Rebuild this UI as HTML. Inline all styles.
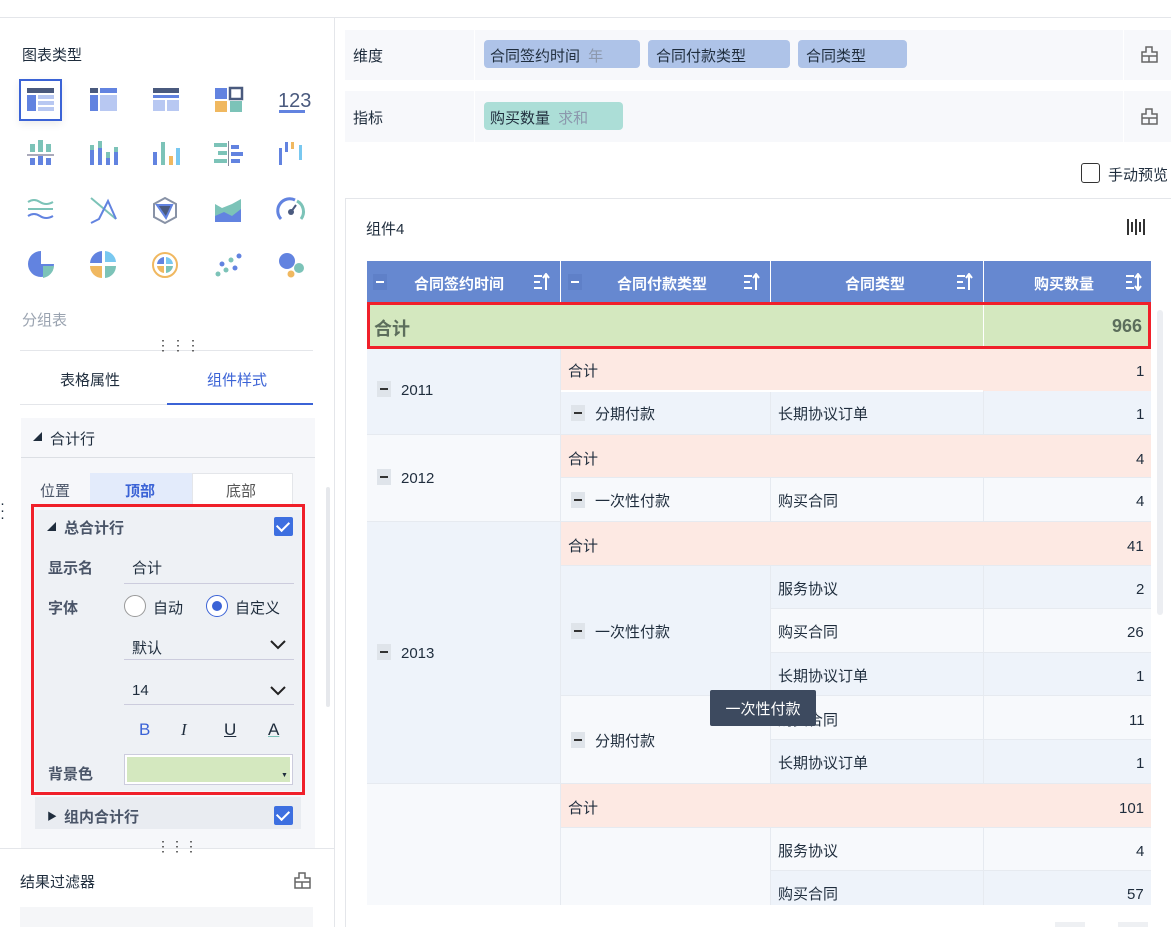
<!DOCTYPE html>
<html><head><meta charset="utf-8"><style>
*{box-sizing:border-box;margin:0;padding:0}
body{width:1171px;height:927px;overflow:hidden;background:#fff;font-family:"Liberation Sans","Noto Sans CJK SC",sans-serif;font-size:15px;color:#1f2d3d;position:relative}
.a{position:absolute}
.t{position:absolute;white-space:nowrap}
.n{position:absolute;white-space:nowrap;margin-top:3px}
.mn{display:inline-block;width:14px;height:16px;background:#dfe4ea;margin-right:10px;position:relative;vertical-align:-2px}
.mn:after{content:"";position:absolute;left:3px;top:7px;width:8px;height:2px;background:#333}
.chk{position:absolute;width:19px;height:19px;background:#3d6fe0;border-radius:2px}
.chk:after{content:"";position:absolute;left:5px;top:2px;width:6px;height:10px;border:solid #fff;border-width:0 2px 2px 0;transform:rotate(45deg)}
.pink{position:absolute;background:#fde9e3}
</style></head><body>
<div class="a" style="left:0;top:17px;width:1171px;height:1px;background:#e4e6ea"></div>
<div class="a" style="left:334px;top:18px;width:1px;height:909px;background:#e4e6ea"></div>
<div class="t" style="left:22px;top:44px;font-size:15px">图表类型</div>
<div class="a" style="left:19px;top:79px;width:43px;height:42px;border:2px solid #3b63d6;box-shadow:0 3px 8px rgba(0,0,0,.08)"></div>
<svg class="a" style="left:0;top:70px" width="334" height="230">
<g>
<rect x="27" y="18" width="27" height="5" fill="#4a5a7e"/><rect x="27" y="25" width="9" height="16" fill="#6283e0"/><rect x="38" y="25" width="16" height="4" fill="#b8c8f2"/><rect x="38" y="31" width="16" height="4" fill="#b8c8f2"/><rect x="38" y="37" width="16" height="4" fill="#b8c8f2"/>
<rect x="90" y="18" width="8" height="5" fill="#4a5a7e"/><rect x="100" y="18" width="17" height="5" fill="#6283e0"/><rect x="90" y="25" width="8" height="16" fill="#6283e0"/><rect x="100" y="25" width="17" height="16" fill="#b8c8f2"/>
<rect x="153" y="18" width="26" height="5" fill="#4a5a7e"/><rect x="153" y="25" width="26" height="3" fill="#6283e0"/><rect x="153" y="30" width="12" height="11" fill="#b8c8f2"/><rect x="167" y="30" width="12" height="11" fill="#b8c8f2"/>
<rect x="215" y="18" width="12" height="11" fill="#6283e0"/><rect x="230" y="18" width="12" height="11" fill="none" stroke="#4a5a7e" stroke-width="2.5"/><rect x="215" y="31" width="12" height="11" fill="#f0b860"/><rect x="230" y="31" width="12" height="11" fill="#7cc3b8"/>
<text x="278" y="37" font-size="20" fill="#4a5a7e" font-family="Liberation Sans">123</text><rect x="279" y="40" width="26" height="3" fill="#6283e0"/>
</g>
<g transform="translate(0,62)">
<rect x="30" y="12" width="5" height="8" fill="#7cc3b8"/><rect x="38" y="8" width="5" height="12" fill="#7cc3b8"/><rect x="46" y="12" width="5" height="8" fill="#7cc3b8"/><rect x="27" y="22" width="27" height="2" fill="#aab"/><rect x="30" y="26" width="5" height="7" fill="#6283e0"/><rect x="38" y="24" width="5" height="9" fill="#6283e0"/><rect x="46" y="26" width="5" height="7" fill="#6283e0"/>
<rect x="90" y="18" width="4" height="15" fill="#6283e0"/><rect x="90" y="13" width="4" height="5" fill="#7cc3b8"/><rect x="98" y="16" width="4" height="17" fill="#6283e0"/><rect x="98" y="9" width="4" height="7" fill="#7cc3b8"/><rect x="106" y="26" width="4" height="7" fill="#6283e0"/><rect x="106" y="20" width="4" height="6" fill="#7cc3b8"/><rect x="114" y="20" width="4" height="13" fill="#6283e0"/><rect x="114" y="15" width="4" height="5" fill="#7cc3b8"/>
<rect x="153" y="20" width="4" height="13" fill="#6283e0"/><rect x="161" y="10" width="4" height="23" fill="#7cc3b8"/><rect x="169" y="24" width="4" height="9" fill="#f0b860"/><rect x="176" y="16" width="4" height="17" fill="#79c8f0"/>
<rect x="214" y="11" width="13" height="4" fill="#7cc3b8"/><rect x="218" y="19" width="9" height="4" fill="#7cc3b8"/><rect x="214" y="27" width="13" height="4" fill="#7cc3b8"/><rect x="228" y="9" width="1" height="25" fill="#889"/><rect x="231" y="13" width="8" height="4" fill="#6283e0"/><rect x="231" y="20" width="12" height="4" fill="#6283e0"/><rect x="231" y="27" width="9" height="4" fill="#6283e0"/>
<rect x="279" y="16" width="3" height="17" fill="#6283e0"/><rect x="285" y="10" width="3" height="10" fill="#6283e0"/><rect x="291" y="10" width="3" height="7" fill="#f0b860"/><rect x="299" y="13" width="3" height="15" fill="#79c8f0"/>
</g>
<g transform="translate(0,119)" fill="none" stroke-width="2">
<path d="M28 13 Q34 9 40 13 T53 13 M28 20 H53" stroke="#7cc3b8"/><path d="M28 27 Q34 23 40 27 T53 27" stroke="#6283e0"/>
<path d="M91 9 L116 30" stroke="#7cc3b8"/><path d="M91 34 L99 30 L108 12 L116 30" stroke="#6283e0"/>
<path d="M165 9 L176 15 L176 28 L165 34 L154 28 L154 15Z" stroke="#8892a6"/><path d="M157 16 L172 16 L166 29Z" fill="#4a5a7e" stroke="#6283e0"/>
<path d="M215 24 L215 15 L222 19 L232 15 L241 10 L241 33 L215 33Z" fill="#7cc3b8" stroke="none"/><path d="M215 33 L215 27 L224 23 L232 27 L241 20 L241 33Z" fill="#6283e0" stroke="none"/>
<path d="M281 30 A12 12 0 0 1 295 11" stroke="#6283e0" stroke-width="3"/><path d="M297 12 A12 12 0 0 1 301 30" stroke="#7cc3b8" stroke-width="3"/><circle cx="291" cy="23" r="3" fill="#4a5a7e" stroke="none"/><path d="M291 23 L296 16" stroke="#4a5a7e"/>
</g>
<g transform="translate(0,167)">
<path d="M41 14 A13 13 0 1 0 54 27 L41 27Z" fill="#6283e0"/><path d="M43 29 H54 A13 13 0 0 1 43 41Z" fill="#7cc3b8"/>
<path d="M102 14 A13 13 0 0 0 90 26 L102 26Z" fill="#6283e0"/><path d="M105 14 A12 12 0 0 1 116 25 L105 25Z" fill="#79c8f0"/><path d="M90 29 H102 V41 A12 12 0 0 1 90 29Z" fill="#f0b860"/><path d="M105 29 H116 A12 12 0 0 1 105 41Z" fill="#7cc3b8"/>
<circle cx="165" cy="28" r="12" fill="none" stroke="#f0b860" stroke-width="2"/><path d="M164 20 A8 8 0 0 0 157 27 H164Z" fill="#6283e0"/><path d="M166 20 A8 8 0 0 1 173 27 H166Z" fill="#79c8f0"/><path d="M157 29 H164 V36 A8 8 0 0 1 157 29Z" fill="#f0b860"/><path d="M166 29 H173 A8 8 0 0 1 166 36Z" fill="#7cc3b8"/>
<circle cx="218" cy="37" r="2.5" fill="#7cc3b8"/><circle cx="226" cy="33" r="2.5" fill="#7cc3b8"/><circle cx="235" cy="31" r="2.5" fill="#6283e0"/><circle cx="222" cy="27" r="2.5" fill="#6283e0"/><circle cx="231" cy="23" r="2.5" fill="#7cc3b8"/><circle cx="239" cy="19" r="2.5" fill="#6283e0"/>
<circle cx="287" cy="24" r="8" fill="#6283e0"/><circle cx="299" cy="31" r="5" fill="#7cc3b8"/><circle cx="291" cy="37" r="3.5" fill="#f0b860"/>
</g>
</svg>
<div class="t" style="left:22px;top:309px;color:#9aa3b0">分组表</div>
<div class="a" style="left:20px;top:350px;width:293px;height:1px;background:#e4e6ea"></div>
<div class="t" style="left:156px;top:337px;font-size:14px;letter-spacing:1px;color:#333">⋮⋮⋮</div>
<div class="t" style="left:60px;top:369px">表格属性</div>
<div class="t" style="left:207px;top:369px;color:#3b63d6">组件样式</div>
<div class="a" style="left:20px;top:404px;width:293px;height:1px;background:#e4e6ea"></div>
<div class="a" style="left:167px;top:403px;width:146px;height:2px;background:#3b63d6"></div>
<div class="a" style="left:21px;top:418px;width:294px;height:430px;background:#f6f7fa"></div>
<div class="a" style="left:21px;top:457px;width:294px;height:1px;background:#dcdfe4"></div>
<div class="t" style="left:33px;top:430px;font-size:9px">◢</div>
<div class="t" style="left:50px;top:428px">合计行</div>
<div class="t" style="left:40px;top:480px;color:#4a5568">位置</div>
<div class="a" style="left:90px;top:473px;width:102px;height:32px;background:#e3ebfb"></div>
<div class="a" style="left:192px;top:473px;width:101px;height:32px;background:#fff;border:1px solid #e4e6ea"></div>
<div class="t" style="left:125px;top:480px;color:#3b63d6;font-weight:bold">顶部</div>
<div class="t" style="left:226px;top:480px;color:#555">底部</div>
<div class="a" style="left:35px;top:510px;width:266px;height:281px;background:#eef1f5"></div>
<div class="a" style="left:31px;top:504px;width:274px;height:291px;border:3px solid #f0202a"></div>
<div class="t" style="left:47px;top:520px;font-size:9px">◢</div>
<div class="t" style="left:64px;top:517px;color:#4a5568;font-weight:bold">总合计行</div>
<div class="chk" style="left:274px;top:517px"></div>
<div class="t" style="left:48px;top:557px;color:#4a5568;font-weight:bold">显示名</div>
<div class="t" style="left:132px;top:557px">合计</div>
<div class="a" style="left:124px;top:583px;width:170px;height:1px;background:#ccd"></div>
<div class="t" style="left:48px;top:597px;color:#4a5568;font-weight:bold">字体</div>
<div class="a" style="left:124px;top:595px;width:22px;height:22px;border:1px solid #999;border-radius:50%;background:#fff"></div>
<div class="t" style="left:153px;top:597px">自动</div>
<div class="a" style="left:206px;top:595px;width:22px;height:22px;border:1px solid #3b63d6;border-radius:50%;background:#fff"></div>
<div class="a" style="left:212px;top:601px;width:10px;height:10px;border-radius:50%;background:#3b63d6"></div>
<div class="t" style="left:235px;top:597px">自定义</div>
<div class="t" style="left:132px;top:637px">默认</div>
<svg class="a" style="left:270px;top:640px" width="16" height="10"><path d="M1 1 L8 8 L15 1" fill="none" stroke="#222" stroke-width="2"/></svg>
<div class="a" style="left:124px;top:659px;width:170px;height:1px;background:#ccd"></div>
<div class="t" style="left:132px;top:682px">14</div>
<svg class="a" style="left:270px;top:686px" width="16" height="10"><path d="M1 1 L8 8 L15 1" fill="none" stroke="#222" stroke-width="2"/></svg>
<div class="a" style="left:124px;top:704px;width:170px;height:1px;background:#ccd"></div>
<div class="t" style="left:139px;top:720px;color:#3b63d6;font-size:17px">B</div>
<div class="t" style="left:181px;top:720px;font-style:italic;font-size:17px;font-family:'Liberation Serif'">I</div>
<div class="t" style="left:224px;top:720px;text-decoration:underline;font-size:17px">U</div>
<div class="t" style="left:268px;top:720px;font-size:17px;text-decoration:underline;text-decoration-color:#7cc3b8">A</div>
<div class="t" style="left:48px;top:763px;color:#4a5568;font-weight:bold">背景色</div>
<div class="a" style="left:124px;top:754px;width:169px;height:31px;border:1px solid #ccd;background:#fff;padding:2px"><div style="width:100%;height:100%;background:#d4e8bf"></div></div>
<div class="t" style="left:281px;top:772px;font-size:7px">▼</div>
<div class="a" style="left:35px;top:797px;width:266px;height:32px;background:#e9ecf1"></div>
<div class="t" style="left:47px;top:808px;font-size:10px">▶</div>
<div class="t" style="left:64px;top:806px;color:#4a5568;font-weight:bold">组内合计行</div>
<div class="chk" style="left:274px;top:806px"></div>
<div class="a" style="left:326px;top:487px;width:4px;height:220px;background:#e6e8ec;border-radius:2px"></div>
<div class="t" style="left:0;top:500px;font-size:15px;line-height:7px;width:8px">·<br>·<br>·</div>
<div class="a" style="left:0;top:848px;width:334px;height:1px;background:#e4e6ea"></div>
<div class="t" style="left:156px;top:838px;font-size:14px;color:#333">⋮⋮⋮</div>
<div class="t" style="left:20px;top:871px">结果过滤器</div>
<svg class="a" style="left:293px;top:871px" width="19" height="19"><path d="M6 2 H12 V7 H17 V17 H2 V7 H6Z M2 11 H17 M9 11 V17" fill="none" stroke="#666" stroke-width="1.5"/></svg>
<div class="a" style="left:20px;top:907px;width:293px;height:20px;background:#f5f6f8"></div>
<!-- right top -->
<div class="a" style="left:345px;top:30px;width:826px;height:50px;background:#f7f8fb"></div>
<div class="a" style="left:474px;top:30px;width:1px;height:50px;background:#fff"></div>
<div class="a" style="left:1123px;top:30px;width:1px;height:50px;background:#fff"></div>
<div class="t" style="left:353px;top:45px">维度</div>
<div class="a" style="left:484px;top:40px;width:156px;height:28px;background:#aec3e8;border-radius:4px"></div>
<div class="t" style="left:490px;top:45px">合同签约时间 <span style="color:#8c98ad;margin-left:4px">年</span></div>
<div class="a" style="left:648px;top:40px;width:142px;height:28px;background:#aec3e8;border-radius:4px"></div>
<div class="t" style="left:656px;top:45px">合同付款类型</div>
<div class="a" style="left:798px;top:40px;width:109px;height:28px;background:#aec3e8;border-radius:4px"></div>
<div class="t" style="left:806px;top:45px">合同类型</div>
<div class="a" style="left:345px;top:91px;width:826px;height:51px;background:#f7f8fb"></div>
<div class="a" style="left:474px;top:91px;width:1px;height:51px;background:#fff"></div>
<div class="a" style="left:1123px;top:91px;width:1px;height:51px;background:#fff"></div>
<div class="t" style="left:353px;top:107px">指标</div>
<div class="a" style="left:484px;top:102px;width:139px;height:28px;background:#acded7;border-radius:4px"></div>
<div class="t" style="left:490px;top:107px">购买数量 <span style="color:#8c98ad;margin-left:4px">求和</span></div>
<svg class="a" style="left:1140px;top:45px" width="19" height="19"><path d="M6 2 H12 V7 H17 V17 H2 V7 H6Z M2 11 H17 M9 11 V17" fill="none" stroke="#666" stroke-width="1.5"/></svg>
<svg class="a" style="left:1140px;top:107px" width="19" height="19"><path d="M6 2 H12 V7 H17 V17 H2 V7 H6Z M2 11 H17 M9 11 V17" fill="none" stroke="#666" stroke-width="1.5"/></svg>
<div class="a" style="left:1081px;top:163px;width:19px;height:20px;border:1.5px solid #333;border-radius:3px"></div>
<div class="t" style="left:1108px;top:164px">手动预览</div>
<div class="a" style="left:345px;top:198px;width:826px;height:729px;border:1px solid #e4e6ea;border-right:none;border-bottom:none"></div>
<div class="t" style="left:366px;top:218px">组件4</div>
<svg class="a" style="left:1126px;top:217px" width="20" height="20"><path d="M2 2 V18 M6 5 V15 M10 2 V18 M14 5 V15 M18 2 V18" stroke="#333" stroke-width="2"/></svg>
<!-- table header -->
<div class="a" style="left:367px;top:261px;width:784px;height:41px;background:#6688d0"></div>
<div class="a" style="left:560px;top:261px;width:1px;height:41px;background:#fff"></div>
<div class="a" style="left:770px;top:261px;width:1px;height:41px;background:#fff"></div>
<div class="a" style="left:983px;top:261px;width:1px;height:41px;background:#fff"></div>
<div class="a" style="left:373px;top:274px;width:14px;height:16px;background:#5f80c8"></div><div class="a" style="left:376px;top:281px;width:8px;height:2px;background:#fff"></div>
<div class="a" style="left:568px;top:274px;width:14px;height:16px;background:#5f80c8"></div><div class="a" style="left:571px;top:281px;width:8px;height:2px;background:#fff"></div>
<div class="t" style="left:414px;top:273px;color:#fff;font-weight:bold">合同签约时间</div>
<div class="t" style="left:617px;top:273px;color:#fff;font-weight:bold">合同付款类型</div>
<div class="t" style="left:845px;top:273px;color:#fff;font-weight:bold">合同类型</div>
<div class="t" style="left:1034px;top:273px;color:#fff;font-weight:bold">购买数量</div>
<svg class="a" style="left:533px;top:273px" width="18" height="18"><path d="M1 3 H9 M1 9 H7 M1 15 H9 M13 17 V2 M10 5 L13 1 L16 5" fill="none" stroke="#fff" stroke-width="2"/></svg>
<svg class="a" style="left:743px;top:273px" width="18" height="18"><path d="M1 3 H9 M1 9 H7 M1 15 H9 M13 17 V2 M10 5 L13 1 L16 5" fill="none" stroke="#fff" stroke-width="2"/></svg>
<svg class="a" style="left:956px;top:273px" width="18" height="18"><path d="M1 3 H9 M1 9 H7 M1 15 H9 M13 17 V2 M10 5 L13 1 L16 5" fill="none" stroke="#fff" stroke-width="2"/></svg>
<svg class="a" style="left:1125px;top:273px" width="18" height="18"><path d="M1 3 H9 M1 9 H7 M1 15 H9 M13 2 V16 M10 5 L13 1 L16 5 M10 13 L13 17 L16 13" fill="none" stroke="#fff" stroke-width="2"/></svg>
<!-- total row -->
<div class="a" style="left:367px;top:302px;width:784px;height:47px;background:#d4e8bf;border:3px solid #f0202a"></div>
<div class="a" style="left:983px;top:305px;width:1px;height:41px;background:#fff"></div>
<div class="t" style="left:374px;top:315px;font-size:18px;font-weight:bold;color:#5c6e5c">合计</div>
<div class="n" style="left:1112px;top:313px;font-size:18px;font-weight:bold;color:#5c6e5c">966</div>
<!-- body -->
<div class="a" style="left:367px;top:349px;width:784px;height:556px;background:#f7f9fc"></div>
<div class="a" style="left:367px;top:349px;width:194px;height:85px;background:#eef3fa"></div>
<div class="a" style="left:367px;top:521px;width:194px;height:262px;background:#eef3fa"></div>
<div class="a" style="left:561px;top:391px;width:590px;height:43px;background:#eef3fa"></div>
<div class="a" style="left:561px;top:565px;width:209px;height:130px;background:#eef3fa"></div>
<div class="a" style="left:770px;top:565px;width:381px;height:43px;background:#eef3fa"></div>
<div class="a" style="left:770px;top:652px;width:381px;height:43px;background:#eef3fa"></div>
<div class="a" style="left:770px;top:739px;width:381px;height:44px;background:#eef3fa"></div>
<div class="a" style="left:770px;top:870px;width:381px;height:35px;background:#eef3fa"></div>
<!-- grid lines -->
<div class="a" style="left:560px;top:349px;width:1px;height:556px;background:#e6eaf0"></div>
<div class="a" style="left:770px;top:391px;width:1px;height:514px;background:#e6eaf0"></div>
<div class="a" style="left:983px;top:391px;width:1px;height:514px;background:#e6eaf0"></div>
<div class="a" style="left:367px;top:434px;width:784px;height:1px;background:#e6eaf0"></div>
<div class="a" style="left:367px;top:521px;width:784px;height:1px;background:#e6eaf0"></div>
<div class="a" style="left:367px;top:783px;width:784px;height:1px;background:#e6eaf0"></div>
<div class="a" style="left:561px;top:477px;width:590px;height:1px;background:#e6eaf0"></div>
<div class="a" style="left:561px;top:565px;width:590px;height:1px;background:#e6eaf0"></div>
<div class="a" style="left:561px;top:695px;width:590px;height:1px;background:#e6eaf0"></div>
<div class="a" style="left:561px;top:827px;width:590px;height:1px;background:#e6eaf0"></div>
<div class="a" style="left:770px;top:608px;width:381px;height:1px;background:#e6eaf0"></div>
<div class="a" style="left:770px;top:652px;width:381px;height:1px;background:#e6eaf0"></div>
<div class="a" style="left:770px;top:739px;width:381px;height:1px;background:#e6eaf0"></div>
<div class="a" style="left:770px;top:870px;width:381px;height:1px;background:#e6eaf0"></div>
<!-- subtotal rows (over grid) -->
<div class="pink" style="left:561px;top:349px;width:590px;height:42px"></div>
<div class="pink" style="left:561px;top:435px;width:590px;height:42px"></div>
<div class="pink" style="left:561px;top:522px;width:590px;height:43px"></div>
<div class="pink" style="left:561px;top:784px;width:590px;height:43px"></div>
<div class="a" style="left:561px;top:390px;width:422px;height:2px;background:#fff"></div>
<!-- text -->
<div class="t" style="left:377px;top:381px"><span class="mn"></span>2011</div>
<div class="t" style="left:377px;top:469px"><span class="mn"></span>2012</div>
<div class="t" style="left:377px;top:644px"><span class="mn"></span>2013</div>
<div class="t" style="left:568px;top:360px">合计</div><div class="n" style="left:1136px;top:360px">1</div>
<div class="t" style="left:571px;top:403px"><span class="mn"></span>分期付款</div><div class="t" style="left:778px;top:403px">长期协议订单</div><div class="n" style="left:1136px;top:403px">1</div>
<div class="t" style="left:568px;top:448px">合计</div><div class="n" style="left:1136px;top:448px">4</div>
<div class="t" style="left:571px;top:490px"><span class="mn"></span>一次性付款</div><div class="t" style="left:778px;top:490px">购买合同</div><div class="n" style="left:1136px;top:490px">4</div>
<div class="t" style="left:568px;top:535px">合计</div><div class="n" style="left:1127px;top:535px">41</div>
<div class="t" style="left:571px;top:621px"><span class="mn"></span>一次性付款</div>
<div class="t" style="left:778px;top:578px">服务协议</div><div class="n" style="left:1136px;top:578px">2</div>
<div class="t" style="left:778px;top:621px">购买合同</div><div class="n" style="left:1127px;top:621px">26</div>
<div class="t" style="left:778px;top:665px">长期协议订单</div><div class="n" style="left:1136px;top:665px">1</div>
<div class="t" style="left:571px;top:730px"><span class="mn"></span>分期付款</div>
<div class="t" style="left:778px;top:709px">购买合同</div><div class="n" style="left:1129px;top:709px">11</div>
<div class="t" style="left:778px;top:752px">长期协议订单</div><div class="n" style="left:1136px;top:752px">1</div>
<div class="t" style="left:568px;top:797px">合计</div><div class="n" style="left:1119px;top:797px">101</div>
<div class="t" style="left:778px;top:840px">服务协议</div><div class="n" style="left:1136px;top:840px">4</div>
<div class="t" style="left:778px;top:883px">购买合同</div><div class="n" style="left:1127px;top:883px">57</div>
<div class="a" style="left:710px;top:690px;width:106px;height:36px;background:#3d4a5f;border-radius:2px;color:#fff;display:flex;align-items:center;justify-content:center">一次性付款</div>
<div class="a" style="left:1157px;top:310px;width:6px;height:305px;background:#eceef2;border-radius:3px"></div>
<div class="a" style="left:1055px;top:922px;width:30px;height:5px;background:#eef0f3"></div>
<div class="a" style="left:1118px;top:922px;width:30px;height:5px;background:#eef0f3"></div>
</body></html>
